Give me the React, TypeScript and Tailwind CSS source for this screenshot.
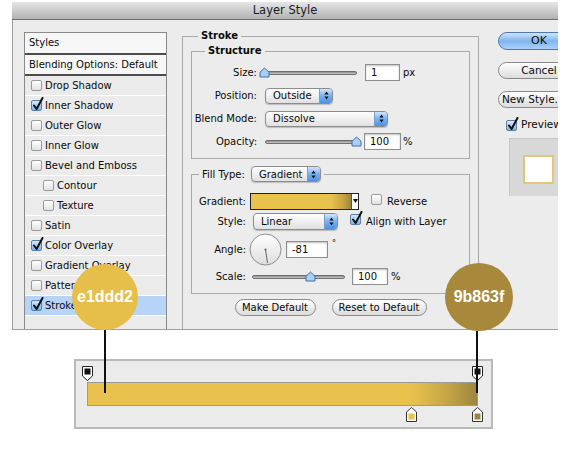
import React from 'react';

function Box({ on }: { on?: boolean }) {
  return (
    <span
      className={
        on
          ? 'relative inline-block h-[11px] w-[11px] shrink-0 rounded-[2px] border border-[#5b7faa] bg-linear-to-b from-[#dbeafb] to-[#7fb2e8]'
          : 'relative inline-block h-[11px] w-[11px] shrink-0 rounded-[2px] border border-[#9a9a9a] bg-linear-to-b from-white to-[#e2e2e2]'
      }
    >
      {on && (
        <svg className="absolute left-[0px] top-[-4px]" width="12" height="14" viewBox="0 0 12 14">
          <path d="M2 8.5 L4.6 12 L10.5 1" fill="none" stroke="#111" strokeWidth="2" strokeLinecap="round" strokeLinejoin="round" />
        </svg>
      )}
    </span>
  );
}

function Popup({ text, className }: { text: string; className: string }) {
  return (
    <div className={`flex shrink-0 items-stretch overflow-hidden rounded-[4px] border border-[#8c8c8c] bg-linear-to-b from-white to-[#e0e0e0] shadow-[0_1px_1px_rgba(0,0,0,0.2)] ${className}`}>
      <span className="flex flex-1 items-center pl-[7px]">{text}</span>
      <span className="flex w-[13px] items-center justify-center border-l border-[#7a9cc6] bg-linear-to-b from-[#cfe5fb] via-[#78b0f0] to-[#4d92e4]">
        <svg width="5" height="9" viewBox="0 0 5 9">
          <path d="M2.5 0.5 L4.6 3.6 H0.4 Z M2.5 8.5 L4.6 5.4 H0.4 Z" fill="#111" />
        </svg>
      </span>
    </div>
  );
}

function Slider({ className, pos }: { className: string; pos: number }) {
  return (
    <div className={`relative h-[12px] shrink-0 ${className}`}>
      <div className="absolute left-0 right-0 top-[4px] h-[4px] rounded-full border border-[#6f6f6f] bg-linear-to-b from-[#8a8a8a] to-[#cfcfcf]" />
      <svg className="absolute top-[0px]" style={{ left: `calc(${pos}% - 5px)` }} width="11" height="11" viewBox="0 0 11 11">
        <path d="M1 10 V5.2 L5.5 1 L10 5.2 V10 Z" fill="#a9cff4" stroke="#416fa6" strokeLinejoin="round" />
      </svg>
    </div>
  );
}

function Field({ value, className }: { value: string; className: string }) {
  return (
    <div className={`flex h-[17px] shrink-0 items-center border border-[#8f8f8f] bg-white pl-[5px] shadow-[inset_0_1px_2px_rgba(0,0,0,0.25)] ${className}`}>
      {value}
    </div>
  );
}

const styles = [
  { name: 'Drop Shadow', on: false, indent: false },
  { name: 'Inner Shadow', on: true, indent: false },
  { name: 'Outer Glow', on: false, indent: false },
  { name: 'Inner Glow', on: false, indent: false },
  { name: 'Bevel and Emboss', on: false, indent: false },
  { name: 'Contour', on: false, indent: true },
  { name: 'Texture', on: false, indent: true },
  { name: 'Satin', on: false, indent: false },
  { name: 'Color Overlay', on: true, indent: false },
  { name: 'Gradient Overlay', on: false, indent: false },
  { name: 'Pattern Overlay', on: false, indent: false },
  { name: 'Stroke', on: true, indent: false },
];

function TopStop() {
  return (
    <svg width="11" height="15" viewBox="0 0 11 15">
      <path d="M0.5 0.5 H10.5 V10 L5.5 14.5 L0.5 10 Z" fill="#fff" stroke="#222" />
      <rect x="2.5" y="2.5" width="6" height="6" fill="#111" />
    </svg>
  );
}

function BottomStop({ color }: { color: string }) {
  return (
    <svg width="11" height="15" viewBox="0 0 11 15">
      <path d="M5.5 0.5 L10.5 5 V14.5 H0.5 V5 Z" fill="#fff" stroke="#333" />
      <rect x="2.5" y="6.5" width="6" height="6" fill={color} />
    </svg>
  );
}

export default function App() {
  return (
    <div className="relative h-[450px] w-[570px] overflow-hidden bg-white font-['DejaVu_Sans',sans-serif] text-[10px] text-[#0a0a0a]">
      <div className="h-[2px]" />

      {/* Layer Style dialog */}
      <div className="ml-[12px] w-[546px] overflow-hidden">
        <div className="flex h-[18px] items-center justify-center border-b border-[#6f6f6f] bg-linear-to-b from-[#e6e6e6] to-[#b2b2b2] text-[11.5px] text-[#1a1a1a]">
          Layer Style
        </div>

        <div className="flex h-[310px] border-b border-l border-[#9d9d9d] bg-[#ececec]">
          {/* Styles list */}
          <div className="shrink-0 pl-[11px] pt-[12px]">
            <div className="flex h-full w-[143px] flex-col border-x border-t border-[#8a8a8a] bg-[#ebebeb]">
              <div className="h-[22px] border-b-2 border-[#4c4c4c] bg-[#f7f7f7] pl-[4px] leading-[19px]">Styles</div>
              <div className="h-[21px] whitespace-nowrap border-b-2 border-[#4c4c4c] bg-[#f7f7f7] pl-[4px] leading-[19px]">Blending Options: Default</div>
              {styles.map(s => (
                <div
                  key={s.name}
                  className={`flex h-[20px] items-center gap-[3px] whitespace-nowrap border-b border-white ${s.indent ? 'pl-[18px]' : 'pl-[6px]'} ${s.name === 'Stroke' ? 'bg-[#b6d4f8]' : ''}`}
                >
                  <Box on={s.on} />
                  <span>{s.name}</span>
                </div>
              ))}
            </div>
          </div>

          {/* Stroke settings */}
          <fieldset className="ml-[15px] mt-[10px] w-[297px] shrink-0 border border-b-0 border-[#a9a9a9] px-[8px]">
            <legend className="ml-[7px] px-[3px] font-bold leading-[12px]">Stroke</legend>

            <fieldset className="mt-[3px] border border-[#a9a9a9] pb-[5px] pt-[4px]">
              <legend className="ml-[13px] px-[3px] font-bold leading-[12px]">Structure</legend>
              <div className="flex h-[23px] items-center">
                <span className="w-[65px] whitespace-nowrap text-right">Size:</span>
                <Slider className="ml-[5px] w-[95px]" pos={2} />
                <Field value="1" className="ml-[8px] w-[35px]" />
                <span className="ml-[3px]">px</span>
              </div>
              <div className="flex h-[23px] items-center">
                <span className="w-[65px] whitespace-nowrap text-right">Position:</span>
                <Popup text="Outside" className="ml-[8px] h-[16px] w-[68px]" />
              </div>
              <div className="flex h-[23px] items-center">
                <span className="w-[65px] whitespace-nowrap text-right">Blend Mode:</span>
                <Popup text="Dissolve" className="ml-[8px] h-[16px] w-[123px]" />
              </div>
              <div className="flex h-[23px] items-center">
                <span className="w-[65px] whitespace-nowrap text-right">Opacity:</span>
                <Slider className="ml-[8px] w-[94px]" pos={97} />
                <Field value="100" className="ml-[5px] w-[37px]" />
                <span className="ml-[2px]">%</span>
              </div>
            </fieldset>

            <fieldset className="mt-[7px] border border-[#a9a9a9] pb-[7px] pt-[9px]">
              <legend className="ml-[7px] px-[3px]">
                <span className="inline-flex items-center gap-[6px]">
                  <span>Fill Type:</span>
                  <Popup text="Gradient" className="h-[16px] w-[70px]" />
                </span>
              </legend>
              <div className="flex h-[20px] items-center">
                <span className="w-[54px] whitespace-nowrap text-right">Gradient:</span>
                <div className="ml-[4px] flex h-[17px] w-[109px] shrink-0 border border-[#222]">
                  <div className="flex-1 bg-[linear-gradient(to_right,#e9c24e_0%,#e9c24e_80%,#c9a443_92%,#9b863f_100%)]" />
                  <div className="flex w-[7px] items-center justify-center border-l border-[#555] bg-white">
                    <svg width="5" height="4" viewBox="0 0 5 4"><path d="M0 0 H5 L2.5 4 Z" fill="#111" /></svg>
                  </div>
                </div>
                <span className="ml-[12px]"><Box /></span>
                <span className="ml-[5px]">Reverse</span>
              </div>
              <div className="flex h-[21px] items-center">
                <span className="w-[54px] text-right">Style:</span>
                <Popup text="Linear" className="ml-[7px] h-[17px] w-[85px]" />
                <span className="ml-[12px]"><Box on /></span>
                <span className="ml-[5px] whitespace-nowrap">Align with Layer</span>
              </div>
              <div className="flex h-[35px] items-center">
                <span className="w-[54px] text-right">Angle:</span>
                <svg className="ml-[3px] shrink-0" width="33" height="33" viewBox="0 0 33 33">
                  <defs>
                    <linearGradient id="dial" x1="0" y1="0" x2="0" y2="1">
                      <stop offset="0" stopColor="#ffffff" />
                      <stop offset="1" stopColor="#dedede" />
                    </linearGradient>
                  </defs>
                  <circle cx="16.5" cy="16.5" r="15.5" fill="url(#dial)" stroke="#8c8c8c" />
                  <line x1="16.5" y1="16.5" x2="18.5" y2="30" stroke="#666" strokeWidth="1" />
                  <circle cx="16.5" cy="16.5" r="1" fill="#555" />
                </svg>
                <Field value="-81" className="ml-[4px] w-[42px]" />
                <span className="ml-[4px] self-start pt-[6px] text-[8px]">°</span>
              </div>
              <div className="flex h-[19px] items-center">
                <span className="w-[54px] text-right">Scale:</span>
                <Slider className="ml-[6px] w-[93px]" pos={62} />
                <Field value="100" className="ml-[7px] w-[36px]" />
                <span className="ml-[3px]">%</span>
              </div>
            </fieldset>

            <div className="mt-[5px] flex justify-center gap-[16px]">
              <div className="flex h-[17px] w-[81px] items-center justify-center whitespace-nowrap rounded-full border border-[#8a8a8a] bg-linear-to-b from-white to-[#dcdcdc]">Make Default</div>
              <div className="flex h-[17px] w-[95px] items-center justify-center whitespace-nowrap rounded-full border border-[#8a8a8a] bg-linear-to-b from-white to-[#dcdcdc]">Reset to Default</div>
            </div>
          </fieldset>

          {/* Buttons and preview */}
          <div className="ml-[19px] flex w-[82px] shrink-0 flex-col pt-[12px]">
            <div className="flex h-[18px] items-center justify-center rounded-full border border-[#4f78a8] bg-linear-to-b from-[#cfe4fa] via-[#7fb5ef] to-[#a9d0f7] text-[11px]">OK</div>
            <div className="mt-[12px] flex h-[17px] items-center justify-center rounded-full border border-[#8a8a8a] bg-linear-to-b from-white to-[#dcdcdc] text-[10.5px]">Cancel</div>
            <div className="mt-[12px] flex h-[17px] items-center whitespace-nowrap rounded-full border border-[#8a8a8a] bg-linear-to-b from-white to-[#dcdcdc] pl-[3px] text-[10.5px]">New Style...</div>
            <div className="mt-[10px] flex h-[14px] items-center gap-[4px] whitespace-nowrap pl-[8px] text-[10.5px]">
              <Box on />
              <span>Preview</span>
            </div>
            <div className="ml-[11px] mt-[6px] h-[58px] w-[60px] border-l border-t border-[#c6c6c6] bg-[#d8d8d8] pl-[13px] pt-[16px]">
              <div className="h-[29px] w-[31px] border-2 border-[#e3c67c] bg-white" />
            </div>
          </div>
        </div>
      </div>

      {/* Gradient editor strip */}
      <div className="ml-[74px] mt-[29px] h-[70px] w-[419px] border-2 border-[#b9b9b9] bg-[#ebebeb] pl-[11px] pt-[5px]">
        <div className="w-[391px]">
          <div className="relative h-[16px]">
            <div className="absolute left-[-5px] top-0"><TopStop /></div>
            <div className="absolute left-[385px] top-0"><TopStop /></div>
          </div>
          <div className="h-[24px] border border-[#9a9a9a] bg-[linear-gradient(to_right,#e9c24e_0%,#e9c24e_83%,#c8a647_92%,#9b863f_100%)]" />
          <div className="relative h-[16px]">
            <div className="absolute left-[319px] top-[1px]"><BottomStop color="#e9c24e" /></div>
            <div className="absolute left-[385px] top-[1px]"><BottomStop color="#9b863f" /></div>
          </div>
        </div>
      </div>

      {/* Colour callouts */}
      <div className="absolute left-[72px] top-[264px] flex h-[66px] w-[66px] items-center justify-center rounded-full bg-[#e6bf4b] font-['Liberation_Sans',sans-serif] text-[16px] font-bold text-white">
        e1ddd2
      </div>
      <div className="absolute left-[104px] top-[330px] h-[63px] w-[2px] bg-[#111]" />
      <div className="absolute left-[445px] top-[263px] flex h-[68px] w-[68px] items-center justify-center rounded-full bg-[#a8893b] font-['Liberation_Sans',sans-serif] text-[16px] font-bold text-white">
        9b863f
      </div>
      <div className="absolute left-[476px] top-[331px] h-[62px] w-[2px] bg-[#111]" />
    </div>
  );
}
